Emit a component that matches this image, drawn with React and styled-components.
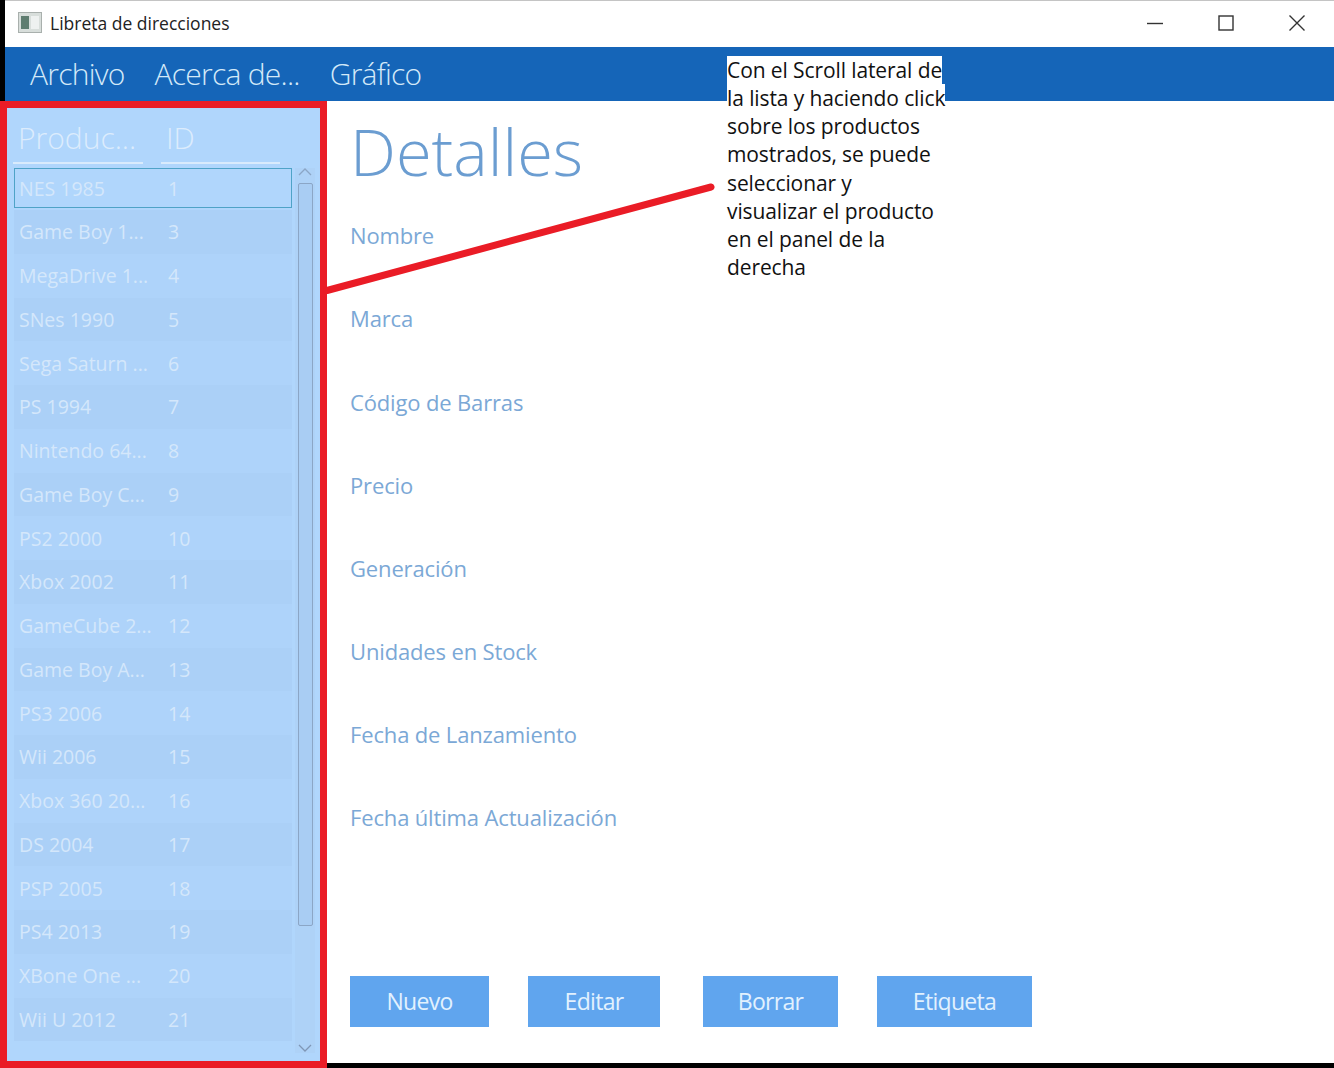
import React from 'react';
import styled, { createGlobalStyle } from 'styled-components';

const GlobalStyle = createGlobalStyle`
  html, body {
    margin: 0;
    padding: 0;
    background: #000000;
  }
  * {
    box-sizing: border-box;
  }
  #root {
    width: 1334px;
    height: 1068px;
    overflow: hidden;
  }
`;

const Page = styled.div`
  position: relative;
  width: 1334px;
  height: 1068px;
  background: #000000;
  font-family: "Open Sans", "Noto Sans", sans-serif;
`;

const TitleBar = styled.div`
  height: 47px;
  margin-left: 5px;
  padding: 0 0 3px 13px;
  background: #ffffff;
  border-top: 1px solid #c4c4c4;
  display: flex;
  align-items: center;
`;

const TitleText = styled.span`
  margin-left: 8px;
  font-size: 17.5px;
  color: #222222;
`;

const WindowButtons = styled.div`
  margin-left: auto;
  display: flex;
  align-items: center;
  padding-right: 29px;
  gap: 55px;
`;

const MenuBar = styled.div`
  height: 54px;
  margin-left: 5px;
  padding: 0 0 2px 25px;
  background: #1565b8;
  display: flex;
  align-items: center;
`;

const MenuItem = styled.span`
  margin-right: 30px;
  font-size: 30px;
  font-weight: 300;
  letter-spacing: -0.75px;
  color: #d3e9f8;
`;

const Content = styled.div`
  display: flex;
  align-items: flex-start;
`;

const Sidebar = styled.aside`
  width: 327px;
  height: 967px;
  flex: none;
  border: 7px solid #ea1c26;
  background: #b0d6fc;
  display: flex;
  flex-direction: column;
  padding: 11px 0 0 6px;
`;

const ColumnHeaders = styled.div`
  display: flex;
  height: 45px;
  gap: 18px;
`;

const ColumnHeader = styled.div`
  width: ${(props) => props.$width}px;
  height: 45px;
  padding-left: ${(props) => props.$inset}px;
  border-bottom: 2px solid #d9ebfc;
  font-size: 30px;
  line-height: 38px;
  font-weight: 300;
  color: #dcecfc;
`;

const ListArea = styled.div`
  display: flex;
  margin-top: 4px;
`;

const Rows = styled.div`
  width: 279px;
  flex: none;
  padding-left: 1px;
`;

const Row = styled.div`
  height: 43.75px;
  display: flex;
  align-items: center;
  font-size: 19.5px;
  color: #d4e7fb;
  background: ${(props) => (props.$striped ? '#abd0f7' : '#aed3fa')};
  border: ${(props) => (props.$selected ? '1px solid #4fa3c7' : 'none')};
  ${(props) => props.$selected && 'height: 40px; margin-bottom: 2px; background: #b0d6fc;'}
  padding-left: ${(props) => (props.$selected ? 4 : 5)}px;
`;

const NameCell = styled.span`
  width: 149px;
  flex: none;
  white-space: nowrap;
`;

const Scrollbar = styled.div`
  width: 20px;
  height: 885px;
  margin-left: 3px;
  display: flex;
  flex-direction: column;
  align-items: center;
  background: #aed2f7;
`;

const ScrollArrow = styled.svg`
  width: 14px;
  height: 8px;
  flex: none;
  margin: ${(props) => props.$margin};
`;

const ScrollThumb = styled.div`
  width: 15px;
  height: 743px;
  flex: none;
  background: #a9cdf3;
  border: 1px solid #8ba6c6;
  border-radius: 2px;
`;

const Details = styled.main`
  flex: 1;
  height: 962px;
  background: #ffffff;
  padding: 8px 0 0 23px;
  display: flex;
  flex-direction: column;
`;

const Heading = styled.h1`
  margin: 0;
  height: 95px;
  font-size: 65px;
  line-height: 84px;
  font-weight: 300;
  color: #6b9dd1;
`;

const Fields = styled.div`
  display: flex;
  flex-direction: column;
`;

const FieldLabel = styled.div`
  height: 83.1px;
  padding-top: 16.4px;
  font-size: 22px;
  line-height: 30px;
  letter-spacing: -0.15px;
  color: #7ba8d6;
`;

const Actions = styled.div`
  display: flex;
  margin-top: 107.4px;
`;

const ActionButton = styled.button`
  width: ${(props) => props.$width}px;
  height: 51px;
  margin-right: ${(props) => props.$gap}px;
  border: none;
  padding: 0 0 2px;
  background: #60a5ee;
  font-family: inherit;
  font-size: 23px;
  letter-spacing: -0.7px;
  color: #e2f1fe;
`;

const Note = styled.div`
  position: absolute;
  left: 727px;
  top: 56px;
  width: 222px;
  font-size: 21px;
  line-height: 28.15px;
  letter-spacing: -0.1px;
  color: #111111;
`;

const NoteLine = styled.div`
  white-space: nowrap;
  width: fit-content;
  background: ${(props) => (props.$lit ? '#ffffff' : 'transparent')};
`;

const Pointer = styled.svg`
  position: absolute;
  left: 0;
  top: 0;
  width: 1334px;
  height: 1068px;
  pointer-events: none;
`;

const products = [
  ['NES 1985', '1'],
  ['Game Boy 1...', '3'],
  ['MegaDrive 1...', '4'],
  ['SNes 1990', '5'],
  ['Sega Saturn ...', '6'],
  ['PS 1994', '7'],
  ['Nintendo 64...', '8'],
  ['Game Boy C...', '9'],
  ['PS2 2000', '10'],
  ['Xbox 2002', '11'],
  ['GameCube 2...', '12'],
  ['Game Boy A...', '13'],
  ['PS3 2006', '14'],
  ['Wii 2006', '15'],
  ['Xbox 360 20...', '16'],
  ['DS 2004', '17'],
  ['PSP 2005', '18'],
  ['PS4 2013', '19'],
  ['XBone One ...', '20'],
  ['Wii U 2012', '21'],
];

const fields = [
  'Nombre',
  'Marca',
  'Código de Barras',
  'Precio',
  'Generación',
  'Unidades en Stock',
  'Fecha de Lanzamiento',
  'Fecha última Actualización',
];

const buttons = [
  { label: 'Nuevo', width: 139, gap: 39 },
  { label: 'Editar', width: 132, gap: 43 },
  { label: 'Borrar', width: 135, gap: 39 },
  { label: 'Etiqueta', width: 155, gap: 0 },
];

const noteLines = [
  'Con el Scroll lateral de',
  'la lista y haciendo click',
  'sobre los productos',
  'mostrados, se puede',
  'seleccionar y',
  'visualizar el producto',
  'en el panel de la',
  'derecha',
];

const AppIcon = () => (
  <svg width="24" height="21" viewBox="0 0 24 21">
    <rect x="0.5" y="0.5" width="23" height="20" fill="#d8dedb" stroke="#a9b0ad" />
    <rect x="3" y="4" width="8" height="13" fill="#5f7d70" />
    <rect x="13" y="4" width="8" height="13" fill="#eef1f0" />
  </svg>
);

const MinimizeIcon = () => (
  <svg width="16" height="16" viewBox="0 0 16 16">
    <path d="M0 8.5h16" stroke="#333333" strokeWidth="1.4" fill="none" />
  </svg>
);

const MaximizeIcon = () => (
  <svg width="16" height="16" viewBox="0 0 16 16">
    <rect x="1" y="1" width="14" height="14" stroke="#333333" strokeWidth="1.4" fill="none" />
  </svg>
);

const CloseIcon = () => (
  <svg width="16" height="16" viewBox="0 0 16 16">
    <path d="M0.5 0.5l15 15M15.5 0.5l-15 15" stroke="#333333" strokeWidth="1.4" fill="none" />
  </svg>
);

const App = () => (
  <Page>
    <GlobalStyle />
    <TitleBar>
      <AppIcon />
      <TitleText>Libreta de direcciones</TitleText>
      <WindowButtons>
        <MinimizeIcon />
        <MaximizeIcon />
        <CloseIcon />
      </WindowButtons>
    </TitleBar>
    <MenuBar>
      <MenuItem>Archivo</MenuItem>
      <MenuItem>Acerca de...</MenuItem>
      <MenuItem>Gráfico</MenuItem>
    </MenuBar>
    <Content>
      <Sidebar>
        <ColumnHeaders>
          <ColumnHeader $width={130} $inset={5}>Produc...</ColumnHeader>
          <ColumnHeader $width={119} $inset={5}>ID</ColumnHeader>
        </ColumnHeaders>
        <ListArea>
          <Rows>
            {products.map(([name, id], i) => (
              <Row key={id} $selected={i === 0} $striped={i % 2 === 1}>
                <NameCell>{name}</NameCell>
                {id}
              </Row>
            ))}
          </Rows>
          <Scrollbar>
            <ScrollArrow $margin="0 0 7px" viewBox="0 0 14 8">
              <path d="M1 7l6-6 6 6" stroke="#8ba6c6" strokeWidth="1.3" fill="none" />
            </ScrollArrow>
            <ScrollThumb />
            <ScrollArrow $margin="118px 0 0" viewBox="0 0 14 8">
              <path d="M1 1l6 6 6-6" stroke="#7f97b6" strokeWidth="1.3" fill="none" />
            </ScrollArrow>
          </Scrollbar>
        </ListArea>
      </Sidebar>
      <Details>
        <Heading>Detalles</Heading>
        <Fields>
          {fields.map((label) => (
            <FieldLabel key={label}>{label}</FieldLabel>
          ))}
        </Fields>
        <Actions>
          {buttons.map((b) => (
            <ActionButton key={b.label} $width={b.width} $gap={b.gap}>
              {b.label}
            </ActionButton>
          ))}
        </Actions>
      </Details>
    </Content>
    <Pointer viewBox="0 0 1334 1068">
      <path d="M327 290.5L711 187" stroke="#ea1c26" strokeWidth="7" strokeLinecap="round" fill="none" />
    </Pointer>
    <Note>
      {noteLines.map((line, i) => (
        <NoteLine key={line} $lit={i < 2}>{line}</NoteLine>
      ))}
    </Note>
  </Page>
);

export default App;
